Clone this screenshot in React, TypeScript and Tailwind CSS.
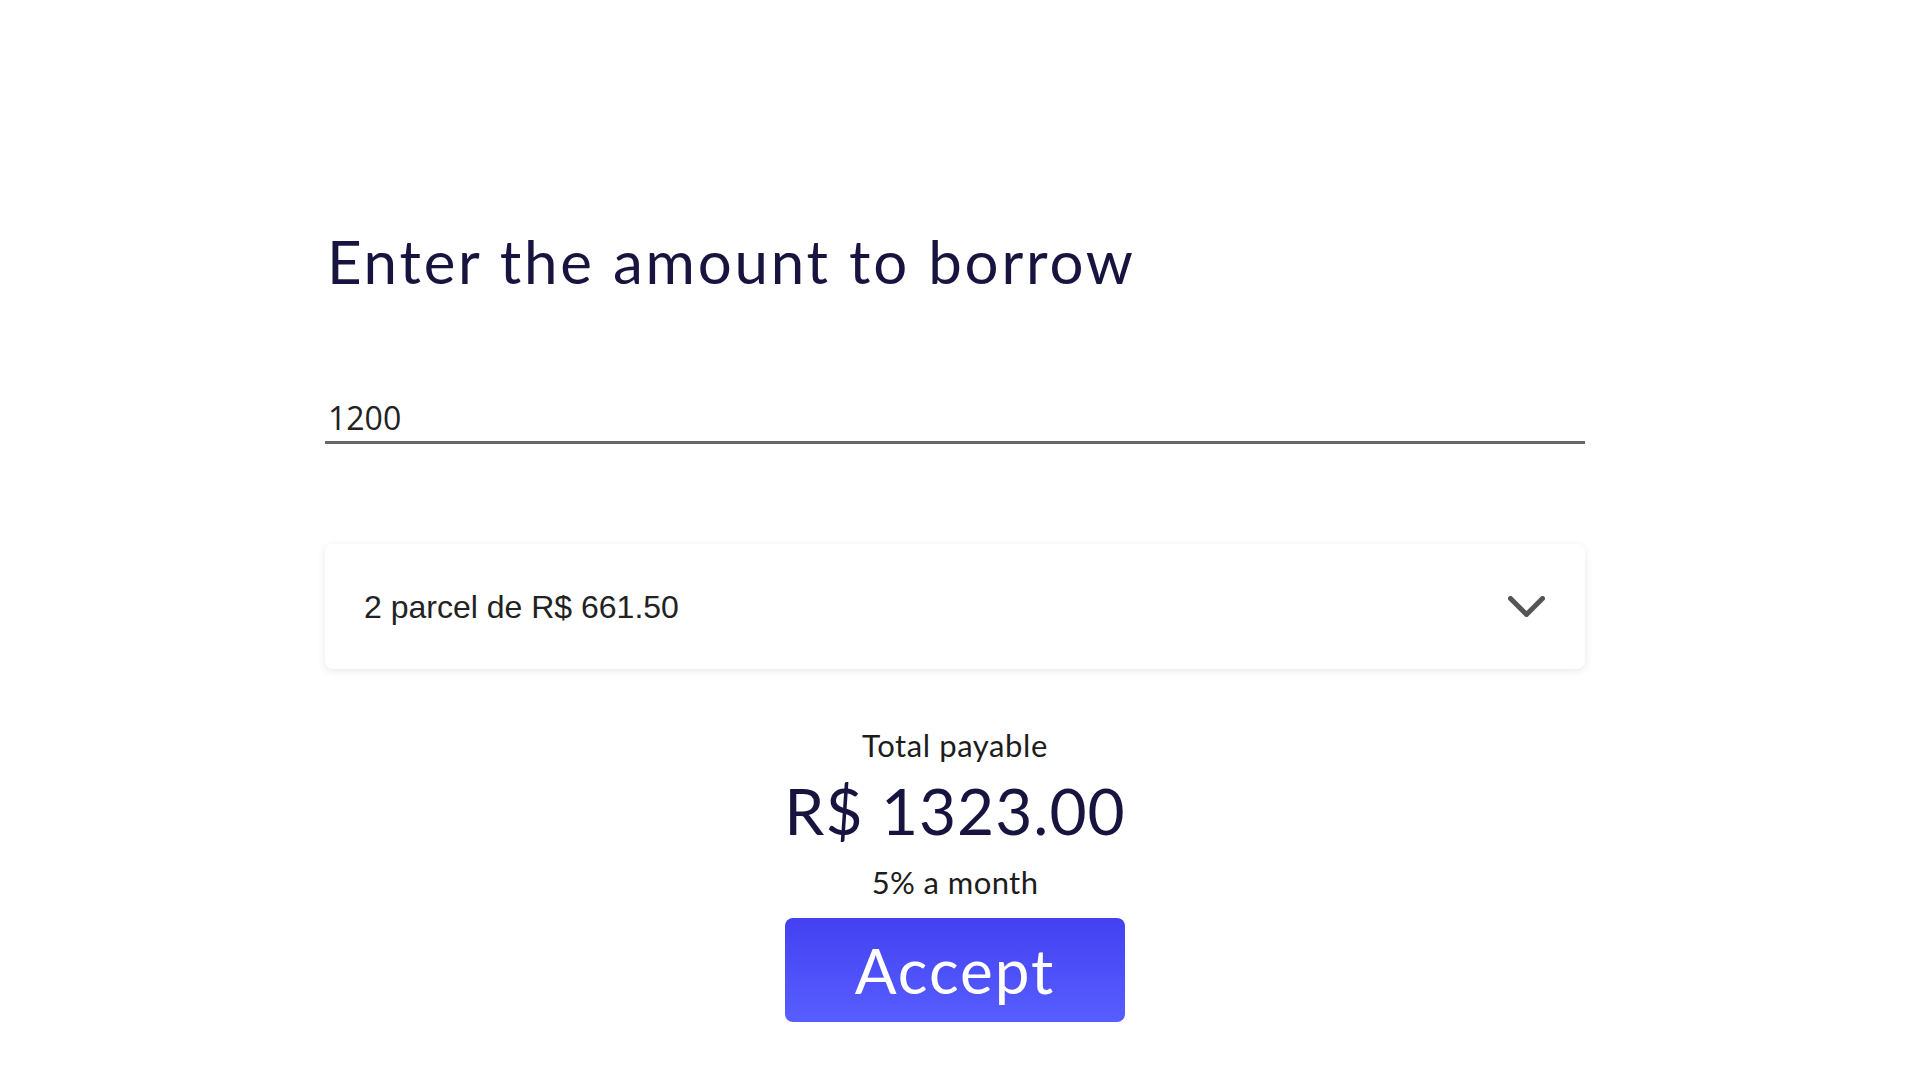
import React, { useState } from 'react';

const App: React.FC = () => {
    const [amount, setAmount] = useState('1200');

    return (
        <div className="min-h-screen bg-white">
            <div className="w-[1260px] mx-auto pt-[225px] flex flex-col">
                {/* Title */}
                <h1 className="font-['Lato',sans-serif] text-[60px] leading-[1.2] tracking-[2.8px] text-[#17153f] pl-[2px]">
                    Enter the amount to borrow
                </h1>

                {/* Amount input */}
                <input
                    value={amount}
                    onChange={(e) => setAmount(e.target.value)}
                    className="mt-[101px] w-full font-['Open_Sans',sans-serif] text-[32px] leading-[40px] text-[#222] pl-[3px] pb-[3px] border-b-[3px] border-[#666] outline-none bg-transparent"
                />

                {/* Installments select */}
                <div className="mt-[100px] h-[125px] flex items-center justify-between pl-[39px] pr-[40px] bg-white rounded-lg shadow-[0_2px_8px_rgba(0,0,0,0.09)]">
                    <span className="font-['Liberation_Sans',Arial,sans-serif] text-[32px] text-[#222]">
                        2 parcel de R$ 661.50
                    </span>
                    <svg width="37" height="21" viewBox="0 0 37 21" fill="none">
                        <polyline points="2.5,2.5 18.5,18.5 34.5,2.5" stroke="#555" strokeWidth="5" strokeLinecap="round" strokeLinejoin="round" />
                    </svg>
                </div>

                {/* Summary */}
                <div className="flex flex-col items-center font-['Lato',sans-serif]">
                    <p className="mt-[58px] text-[31px] leading-[1.2] tracking-[0.6px] text-[#1c1c1c]">Total payable</p>
                    <p className="mt-[9px] text-[64px] leading-[1.2] tracking-[1px] text-[#17153f]">R$ 1323.00</p>
                    <p className="mt-[14px] text-[31px] leading-[1.2] tracking-[0.4px] text-[#1c1c1c]">5% a month</p>
                    <button className="mt-[17px] w-[340px] h-[104px] rounded-lg bg-linear-to-b from-[#4440f1] to-[#575eff] text-white text-[62px] leading-none tracking-[2px]">
                        Accept
                    </button>
                </div>
            </div>
        </div>
    );
};

export default App;
